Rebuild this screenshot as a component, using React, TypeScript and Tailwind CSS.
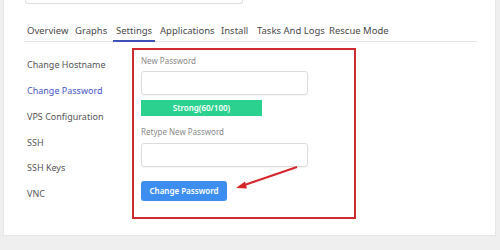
const tabs = [
  { name: "Overview", w: "w-[48px]" },
  { name: "Graphs", w: "w-[41px]" },
  { name: "Settings", w: "w-[44px]", active: true },
  { name: "Applications", w: "w-[61px]" },
  { name: "Install", w: "w-[36px]" },
  { name: "Tasks And Logs", w: "w-[72px]" },
  { name: "Rescue Mode", w: "w-[60px]" },
];

const menu = [
  "Change Hostname",
  "Change Password",
  "VPS Configuration",
  "SSH",
  "SSH Keys",
  "VNC",
];

export default function App() {
  return (
    <div
      className="relative w-[500px] h-[250px] overflow-hidden bg-[#efefef]"
      style={{ fontFamily: '"Noto Sans", "Open Sans", sans-serif' }}
    >
      <div className="ml-[3px] w-[493px] h-[236px] bg-white border-x border-b border-[#e6e6e6]">
        {/* bottom of the field above */}
        <div className="ml-[21px] w-[218px] h-[4px] border-x border-b border-[#dedede] rounded-b-[3px]" />

        {/* tabs */}
        <div className="mt-[20px] ml-[20px] mr-[18px] flex border-b border-[#e4e4e4]">
          {tabs.map((t) => (
            <div key={t.name} className={`${t.w} shrink-0 flex`}>
              <span
                className={`block px-[3px] pb-[3px] text-[9.5px] leading-[13px] text-[#4a4a4a] whitespace-nowrap ${
                  t.active ? "border-b-2 border-[#3f51b5] -mb-px" : ""
                }`}
              >
                {t.name}
              </span>
            </div>
          ))}
        </div>

        <div className="flex mt-[6px] ml-[23px]">
          {/* side menu */}
          <div className="w-[105px] pt-[4px]">
            {menu.map((m) => (
              <div
                key={m}
                className={`h-[25.8px] flex items-center text-[9px] whitespace-nowrap ${
                  m === "Change Password" ? "text-[#4655c4]" : "text-[#555]"
                }`}
              >
                {m}
              </div>
            ))}
          </div>

          {/* highlighted form */}
          <div className="w-[224px] h-[171px] border-2 border-[#cf2a2f] pl-[7px] pt-[5px]">
            <div className="text-[8px] leading-[12px] text-[#8a8a8a]">New Password</div>
            <div className="mt-[4px] w-[167px] h-[24px] border border-[#dcdcdc] rounded-[3px] shadow-[0_1px_1px_rgba(0,0,0,0.04)]" />
            <div className="mt-[5px] w-[121px] h-[16px] bg-[#2bd18f] flex items-center justify-center text-[8px] font-semibold text-white">
              Strong(60/100)
            </div>
            <div className="mt-[10px] text-[8px] leading-[12px] text-[#8a8a8a]">Retype New Password</div>
            <div className="mt-[5px] w-[167px] h-[24px] border border-[#dcdcdc] rounded-[3px] shadow-[0_1px_1px_rgba(0,0,0,0.04)]" />
            <button className="mt-[14px] w-[86px] h-[20px] rounded-[3px] bg-[#3d8ef0] text-white text-[8px] font-semibold">
              Change Password
            </button>
          </div>
        </div>
      </div>

      {/* annotation arrow */}
      <svg className="absolute left-0 top-0 pointer-events-none" width="500" height="250">
        <line x1="297" y1="167" x2="243" y2="185.5" stroke="#d3262c" strokeWidth="2" />
        <polygon points="236,188 245,181.5 247,188.5" fill="#d3262c" />
      </svg>
    </div>
  );
}
